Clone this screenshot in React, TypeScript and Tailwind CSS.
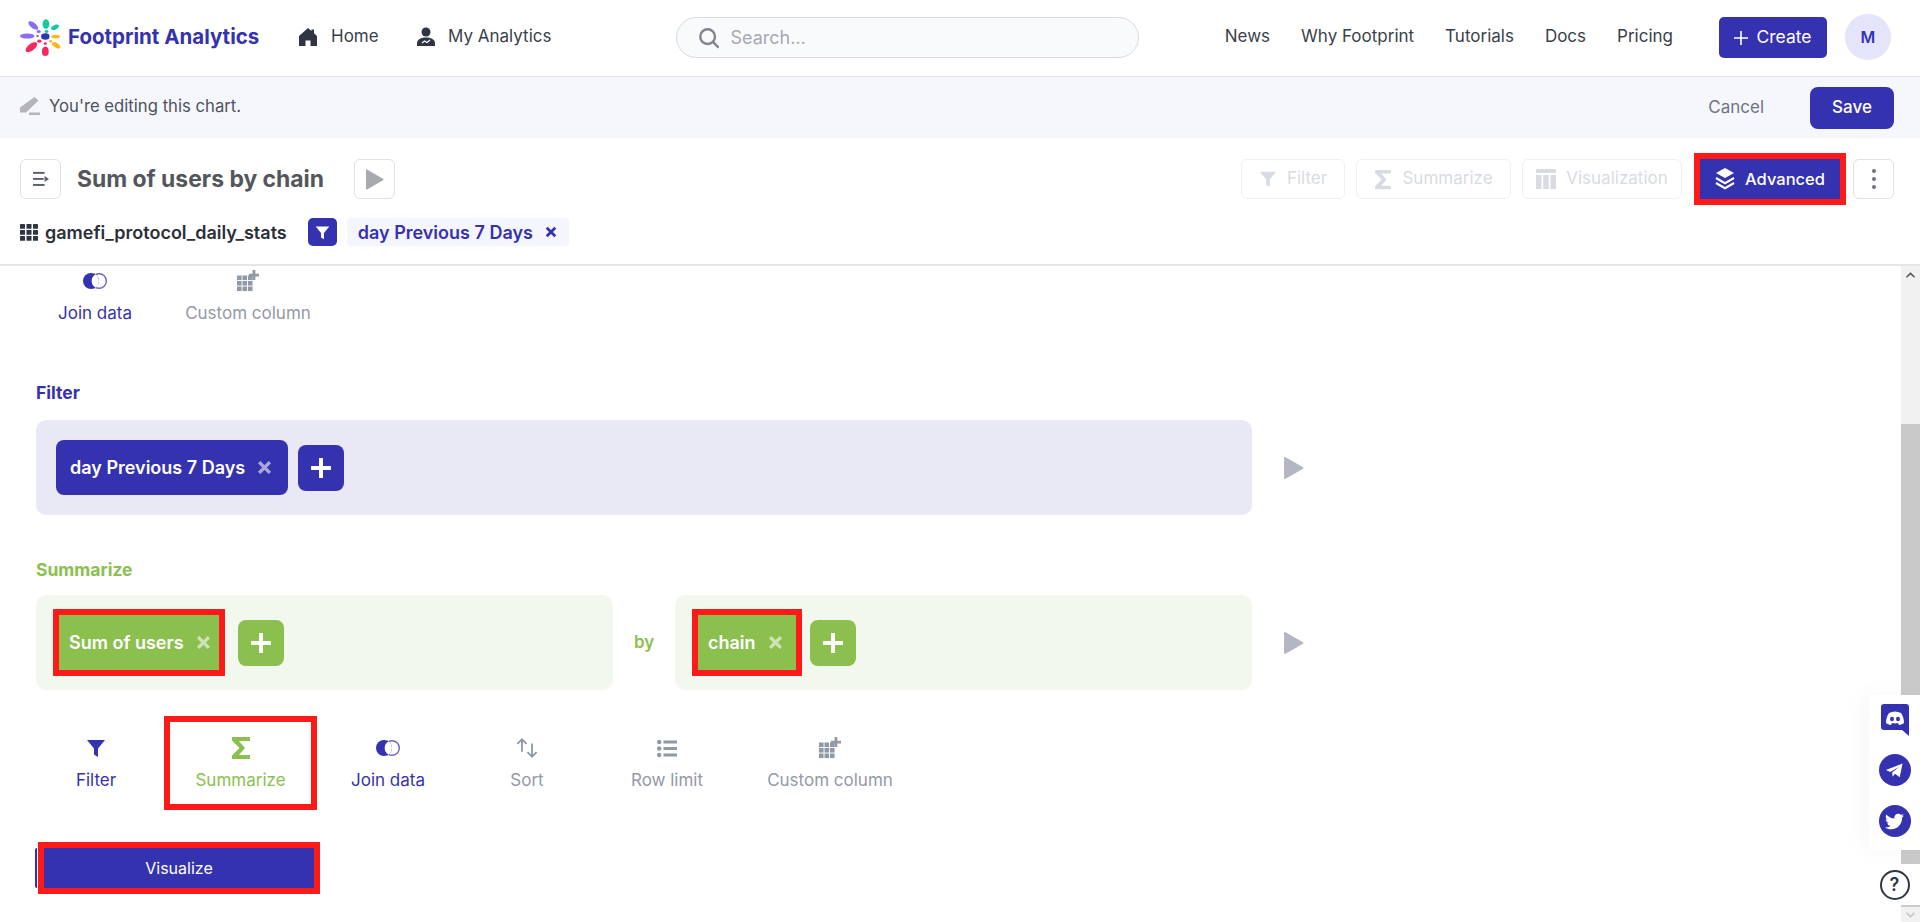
import React from "react";
import { FaTwitter } from "react-icons/fa";

// small drawn icons, same shapes the product uses
const Funnel = ({ className }: { className?: string }) => (
  <svg viewBox="0 0 20 20" className={className} fill="currentColor">
    <path d="M1 2h18l-7 8.500V19l-4-2.500v-6z" />
  </svg>
);

const Sigma = ({ className }: { className?: string }) => (
  <svg viewBox="0 0 20 24" className={className} fill="currentColor">
    <path d="M1 1h18v4H8l6 7-6 7h11v4H1v-3.500L8.500 12 1 4.500z" />
  </svg>
);

const Plus = ({ className }: { className?: string }) => (
  <svg viewBox="0 0 20 20" className={className} fill="currentColor">
    <path d="M8.200 1h3.600v7.200H19v3.600h-7.200V19H8.200v-7.200H1V8.200h7.200z" />
  </svg>
);

const Cross = ({ className }: { className?: string }) => (
  <svg viewBox="0 0 14 14" className={className} stroke="currentColor" strokeWidth="3.200" fill="none">
    <path d="M2 2l10 10M12 2L2 12" />
  </svg>
);

const Play = ({ className }: { className?: string }) => (
  <svg viewBox="0 0 20 22" className={className} fill="currentColor">
    <path d="M1 1.500v19a1 1 0 0 0 1.500.8l16.500-9.500a1 1 0 0 0 0-1.600L2.500.7A1 1 0 0 0 1 1.500z" />
  </svg>
);

const Grid = ({ className }: { className?: string }) => (
  <svg viewBox="0 0 19 17" className={className} fill="currentColor">
    {[0, 6.5, 13].map((x) =>
      [0, 6, 12].map((y) => <rect key={`${x}-${y}`} x={x} y={y} width="5" height="4.800" rx="0.500" />)
    )}
  </svg>
);

const JoinIcon = ({ className }: { className?: string }) => (
  <svg viewBox="0 0 24 18" className={className}>
    <circle cx="8" cy="9" r="8" fill="currentColor" />
    <circle cx="16" cy="9" r="7.300" fill="none" stroke="currentColor" strokeOpacity="0.750" strokeWidth="1.400" />
    <path d="M12 2.100A8 8 0 0 1 12 15.900A8 8 0 0 1 12 2.100z" fill="#fff" />
    <path d="M12 2.100A8 8 0 0 0 12 15.900" fill="none" stroke="currentColor" strokeWidth="1.200" />
  </svg>
);

const CustomColumnIcon = ({ className }: { className?: string }) => (
  <svg viewBox="0 0 24 24" className={className} fill="currentColor">
    {[0, 6, 12].map((x) =>
      [6, 12, 18].map((y) => <rect key={`${x}-${y}`} x={x} y={y} width="5" height="5" />)
    )}
    <path d="M17 0h3v4h4v3h-4v4h-3V7h-4V4h4z" />
  </svg>
);

const SortIcon = ({ className }: { className?: string }) => (
  <svg viewBox="0 0 24 24" className={className} fill="none" stroke="currentColor" strokeWidth="2">
    <path d="M6.500 16V2.500M1.500 7.500l5-5 5 5M17.500 7v14.500M12.500 16.500l5 5 5-5" />
  </svg>
);

const RowLimitIcon = ({ className }: { className?: string }) => (
  <svg viewBox="0 0 20 18" className={className} fill="currentColor">
    <circle cx="2.200" cy="2.500" r="2.200" />
    <circle cx="2.200" cy="9" r="2.200" />
    <circle cx="2.200" cy="15.500" r="2.200" />
    <rect x="6.500" y="1" width="13.500" height="3" />
    <rect x="6.500" y="7.500" width="13.500" height="3" />
    <rect x="6.500" y="14" width="13.500" height="3" />
  </svg>
);

const Logo = () => (
  <svg viewBox="2 1.500 34 40" preserveAspectRatio="none" className="w-[41px] h-[37px] shrink-0">
    <ellipse cx="23.500" cy="7" rx="2.800" ry="5.200" fill="#14c8a0" />
    <ellipse cx="31" cy="10.500" rx="2.200" ry="3.800" transform="rotate(50 31 10.500)" fill="#14c8a0" />
    <circle cx="24" cy="15" r="1.600" fill="#14c8a0" />
    <ellipse cx="13" cy="8.500" rx="2.600" ry="5.600" transform="rotate(-40 13 8.500)" fill="#8b6cf6" />
    <circle cx="17.500" cy="15" r="1.700" fill="#8b6cf6" />
    <ellipse cx="8" cy="20" rx="6" ry="2.700" fill="#8b6cf6" />
    <circle cx="16.500" cy="20" r="1.200" fill="#8b6cf6" />
    <circle cx="23" cy="20.500" r="3.500" fill="#3532b0" />
    <ellipse cx="31.500" cy="20.500" rx="3.600" ry="2" fill="#fdb714" />
    <circle cx="27.500" cy="25.500" r="1.300" fill="#fdb714" />
    <ellipse cx="32" cy="30" rx="2.300" ry="4.200" transform="rotate(-45 32 30)" fill="#fdb714" />
    <circle cx="18" cy="25.500" r="1.800" fill="#f8285e" />
    <ellipse cx="11.500" cy="32" rx="3.200" ry="6.500" transform="rotate(40 11.500 32)" fill="#f8285e" />
    <circle cx="23" cy="28" r="1.300" fill="#f8285e" />
    <ellipse cx="23" cy="36.500" rx="2.800" ry="5" fill="#f8285e" />
  </svg>
);

const Tool = ({ icon, label, color, width }: { icon: React.ReactNode; label: string; color: string; width: string }) => (
  <div className={`flex flex-col items-center shrink-0 ${width} ${color}`}>
    <div className="h-[28px] flex items-center justify-center">{icon}</div>
    <span className="mt-[6px] text-[17px] leading-[24px] whitespace-nowrap">{label}</span>
  </div>
);

const FaintButton = ({ icon, label, width }: { icon: React.ReactNode; label: string; width: string }) => (
  <div className={`h-[40px] ${width} rounded-[6px] border border-[#f0f0f3] flex items-center justify-center gap-[10px] text-[#d9dbe4] text-[17px]`}>
    {icon}
    <span>{label}</span>
  </div>
);

export default function App() {
  return (
    <div className="relative w-[1920px] h-[922px] overflow-hidden bg-white font-['Inter',sans-serif] text-[#3a3f4b]">
      {/* top nav */}
      <header className="h-[77px] flex items-center border-b border-[#e3e4ee] pl-[20px] pr-[29px]">
        <div className="flex items-center w-[278px] -mt-[1px]">
          <Logo />
          <span className="ml-[7px] text-[20.500px] font-bold text-[#3532b0] whitespace-nowrap">Footprint Analytics</span>
        </div>
        <div className="flex items-center gap-[13px] w-[118px] -mt-[2px]">
          <svg viewBox="0 0 20 20" className="w-[20px] h-[20px] shrink-0 text-[#2f3542]" fill="currentColor">
            <path d="M10 1L1 9v10h6.500v-5.500h5V19H19V9l-3-2.700V2.500h-2.500v1.600z" />
          </svg>
          <span className="text-[17px]">Home</span>
        </div>
        <div className="flex items-center gap-[12px] -mt-[2px]">
          <svg viewBox="0 0 20 20" className="w-[20px] h-[20px] shrink-0 text-[#2f3542]" fill="currentColor">
            <circle cx="10" cy="5" r="4.500" />
            <path d="M1 19v-3c0-3 3-5.500 9-5.500s9 2.500 9 5.500v3z" />
            <path d="M6 16l2.500-2 2.500 1.500 3-2.500" stroke="#fff" strokeWidth="1.200" fill="none" />
          </svg>
          <span className="text-[17px]">My Analytics</span>
        </div>
        <div className="ml-[125px] w-[463px] h-[41px] rounded-full border border-[#d7dae3] bg-[#f9fafb] flex items-center pl-[21px] -mt-[1px]">
          <svg viewBox="0 0 24 24" className="w-[22px] h-[22px] text-[#80848f]" fill="none" stroke="currentColor" strokeWidth="2.600">
            <circle cx="10.500" cy="10.500" r="8" />
            <path d="M16.500 16.500L22.500 22.500" />
          </svg>
          <span className="ml-[10px] text-[18px] text-[#a6a9b3]">Search…</span>
        </div>
        <nav className="ml-auto flex items-center gap-[31px] text-[17px] -mt-[2px]">
          <span>News</span>
          <span>Why Footprint</span>
          <span>Tutorials</span>
          <span>Docs</span>
          <span>Pricing</span>
        </nav>
        <div className="ml-[46px] w-[108px] h-[41px] rounded-[5px] bg-[#3532b0] text-white text-[17.500px] flex items-center justify-center gap-[8px] -mt-[1px]">
          <svg viewBox="0 0 14 14" className="w-[14px] h-[14px]" stroke="currentColor" strokeWidth="1.600" fill="none">
            <path d="M7 0v14M0 7h14" />
          </svg>
          <span>Create</span>
        </div>
        <div className="ml-[18px] w-[46px] h-[46px] rounded-full bg-[#e4e4fa] text-[#3532b0] font-semibold text-[16px] flex items-center justify-center -mt-[3px]">
          M
        </div>
      </header>

      {/* editing bar */}
      <div className="h-[61px] bg-[#f6f7fc] flex items-center pl-[20px] pr-[26px]">
        <svg viewBox="0 0 20 18" className="w-[20px] h-[18px] text-[#b4b4ba] -mt-[4px]" fill="currentColor">
          <path d="M14.500 0l4 3.500L6 15.500H0v-5zM9 15.500h11V18H9z" />
        </svg>
        <span className="ml-[9px] text-[16.700px] text-[#4c5260] -mt-[2px]">You're editing this chart.</span>
        <span className="ml-auto text-[17px] text-[#6f7480]">Cancel</span>
        <div className="ml-[46px] w-[84px] h-[42px] rounded-[8px] bg-[#3532b0] text-white text-[17px] font-medium flex items-center justify-center">
          Save
        </div>
      </div>

      {/* chart title rows */}
      <div className="h-[128px] border-b-2 border-[#e6e6ea] pl-[20px] pr-[26px] pt-[21px]">
        <div className="flex items-center h-[40px]">
          <div className="w-[41px] h-[40px] rounded-[6px] border border-[#dfe1e8] flex items-center justify-center">
            <svg viewBox="0 0 20 18" className="w-[18px] h-[16px] text-[#5b6070]" fill="currentColor">
              <rect x="1" y="1" width="13" height="2.200" />
              <rect x="1" y="7.800" width="12" height="2.200" />
              <rect x="1" y="14.600" width="13" height="2.200" />
              <path d="M14 5.500l5 3.400-5 3.400z" />
            </svg>
          </div>
          <h1 className="ml-[16px] text-[22.900px] font-bold text-[#55565c]">Sum of users by chain</h1>
          <div className="ml-[30px] w-[41px] h-[40px] rounded-[6px] border border-[#dfe1e8] flex items-center justify-center">
            <Play className="w-[19px] h-[21px] text-[#a9a9b0]" />
          </div>
          <div className="ml-auto flex items-center gap-[11px]">
            <FaintButton width="w-[104px]" label="Filter" icon={<Funnel className="w-[18px] h-[20px]" />} />
            <FaintButton width="w-[155px]" label="Summarize" icon={<Sigma className="w-[18px] h-[21px]" />} />
            <FaintButton width="w-[160px]" label="Visualization" icon={<svg viewBox="0 0 20 20" className="w-[20px] h-[20px]" fill="currentColor"><path d="M0 0h20v4H0zM0 6h5.500v14H0zM7.200 6h5.500v14H7.200zM14.500 6H20v14h-5.500z" /></svg>} />
            <div className="ml-[7px] w-[140px] h-[40px] bg-[#3532b0] outline-[6px] outline-[#ff1a1a] text-white text-[16.500px] font-medium flex items-center justify-center gap-[10px]">
              <svg viewBox="0 0 20 22" className="w-[20px] h-[22px]" fill="currentColor">
                <path d="M10 0l9 5-9 5-9-5z" />
                <path d="M1.500 9l8.500 5 8.500-5 1 2-9.500 5.500L.500 11z" />
                <path d="M1.500 14l8.500 5 8.500-5 1 2-9.500 5.500L.500 16z" />
              </svg>
              <span>Advanced</span>
            </div>
            <div className="ml-[2px] w-[41px] h-[40px] rounded-[6px] border border-[#dfe1e8] flex flex-col items-center justify-center gap-[4px]">
              <span className="w-[4px] h-[4px] rounded-full bg-[#6e7280]" />
              <span className="w-[4px] h-[4px] rounded-full bg-[#6e7280]" />
              <span className="w-[4px] h-[4px] rounded-full bg-[#6e7280]" />
            </div>
          </div>
        </div>
        <div className="flex items-center mt-[19px] h-[28px]">
          <Grid className="w-[19px] h-[17px] text-[#2f3542]" />
          <span className="ml-[6px] text-[18px] font-semibold text-[#2b2f38]">gamefi_protocol_daily_stats</span>
          <div className="ml-[21px] w-[29px] h-[28px] rounded-[5px] bg-[#3532b0] flex items-center justify-center">
            <Funnel className="w-[15px] h-[15px] text-white" />
          </div>
          <div className="ml-[10px] h-[28px] w-[222px] rounded-[4px] bg-[#f5f6fd] text-[#3532b0] text-[18px] font-semibold flex items-center pl-[11px]">
            <span>day Previous 7 Days</span>
            <Cross className="ml-[12px] w-[12px] h-[12px]" />
          </div>
        </div>
      </div>

      {/* scrolled query builder */}
      <main className="pl-[36px] pt-[1px]">
        <div className="flex text-[#3532b0]">
          <Tool width="w-[118px]" label="Join data" color="text-[#3532b0]" icon={<JoinIcon className="w-[24px] h-[18px]" />} />
          <Tool width="w-[188px]" label="Custom column" color="text-[#9399a8]" icon={<CustomColumnIcon className="w-[22px] h-[22px] text-[#8f9aa6]" />} />
        </div>

        <div className="mt-[56px] text-[17.500px] font-bold text-[#3532b0] leading-[24px]">Filter</div>
        <div className="flex items-center mt-[15px]">
          <div className="w-[1216px] h-[95px] rounded-[10px] bg-[#e9e9f5] pl-[20px] flex items-center gap-[10px]">
            <div className="w-[232px] h-[55px] rounded-[8px] bg-[#3532b0] text-white text-[18px] font-semibold flex items-center pl-[14px]">
              <span>day Previous 7 Days</span>
              <Cross className="ml-[12px] w-[15px] h-[15px] text-[#a9a8dc]" />
            </div>
            <div className="w-[46px] h-[46px] rounded-[8px] bg-[#3532b0] flex items-center justify-center">
              <Plus className="w-[22px] h-[22px] text-white" />
            </div>
          </div>
          <Play className="ml-[31px] w-[21px] h-[24px] text-[#b4b6c4]" />
        </div>

        <div className="mt-[43px] text-[17.500px] font-bold text-[#8bc04f] leading-[24px]">Summarize</div>
        <div className="flex items-center mt-[13px]">
          <div className="w-[577px] h-[95px] rounded-[10px] bg-[#f2f8ed] pl-[23px] flex items-center">
            <div className="w-[160px] h-[55px] bg-[#8bc04f] outline-[6px] outline-[#ff1a1a] text-white text-[18px] font-semibold flex items-center pl-[10px]">
              <span>Sum of users</span>
              <Cross className="ml-[12px] w-[15px] h-[15px] text-[#cfe3b5]" />
            </div>
            <div className="ml-[19px] w-[46px] h-[46px] rounded-[8px] bg-[#8bc04f] flex items-center justify-center">
              <Plus className="w-[22px] h-[22px] text-white" />
            </div>
          </div>
          <span className="ml-[21px] w-[41px] text-[17px] font-semibold text-[#8bc04f]">by</span>
          <div className="w-[577px] h-[95px] rounded-[10px] bg-[#f2f8ed] pl-[23px] flex items-center">
            <div className="w-[98px] h-[55px] bg-[#8bc04f] outline-[6px] outline-[#ff1a1a] text-white text-[18px] font-semibold flex items-center pl-[10px]">
              <span>chain</span>
              <Cross className="ml-[12px] w-[15px] h-[15px] text-[#cfe3b5]" />
            </div>
            <div className="ml-[14px] w-[46px] h-[46px] rounded-[8px] bg-[#8bc04f] flex items-center justify-center">
              <Plus className="w-[22px] h-[22px] text-white" />
            </div>
          </div>
          <Play className="ml-[31px] w-[21px] h-[24px] text-[#b4b6c4]" />
        </div>

        <div className="flex items-start mt-[26px] ml-[1px]">
          <div className="mt-[18px] w-[118px]">
            <Tool width="w-[118px]" label="Filter" color="text-[#3532b0]" icon={<Funnel className="w-[20px] h-[24px]" />} />
          </div>
          <div className="ml-[9px] w-[153px] h-[94px] border-[6px] border-[#ff1a1a] pt-[12px] flex justify-center">
            <Tool width="w-[120px]" label="Summarize" color="text-[#8bc04f]" icon={<Sigma className="w-[20px] h-[26px]" />} />
          </div>
          <div className="mt-[18px] ml-[12px] w-[118px]">
            <Tool width="w-[118px]" label="Join data" color="text-[#3532b0]" icon={<JoinIcon className="w-[24px] h-[18px]" />} />
          </div>
          <div className="mt-[18px] ml-[21px] w-[118px]">
            <Tool width="w-[118px]" label="Sort" color="text-[#9399a8]" icon={<SortIcon className="w-[22px] h-[22px] text-[#8f9aa6]" />} />
          </div>
          <div className="mt-[18px] ml-[22px] w-[118px]">
            <Tool width="w-[118px]" label="Row limit" color="text-[#9399a8]" icon={<RowLimitIcon className="w-[20px] h-[19px] text-[#8f9aa6]" />} />
          </div>
          <div className="mt-[18px] w-[208px]">
            <Tool width="w-[208px]" label="Custom column" color="text-[#9399a8]" icon={<CustomColumnIcon className="w-[22px] h-[22px] text-[#8f9aa6]" />} />
          </div>
        </div>

        <div className="flex items-center mt-[38px] -ml-[1px]">
          <span className="w-[2px] h-[40px] rounded-l-[4px] bg-[#3532b0]" />
          <div className="ml-[7px] w-[270px] h-[40px] bg-[#3532b0] outline-[6px] outline-[#ff1a1a] text-white text-[16px] flex items-center justify-center">
            Visualize
          </div>
        </div>
      </main>

      {/* scrollbar */}
      <div className="absolute right-0 top-[266px] bottom-0 w-[19px] bg-[#f1f1f1] flex flex-col items-center">
        <svg viewBox="0 0 10 6" className="mt-[6px] w-[9px] h-[6px] text-[#505050]" fill="currentColor">
          <path d="M5 0l5 5-1 1-4-3.500L1 6 0 5z" />
        </svg>
        <div className="mt-[146px] w-full h-[483px] bg-[#c9c9c9]" />
        <svg viewBox="0 0 10 6" className="mt-[5px] w-[9px] h-[6px] text-[#c4c4c4]" fill="currentColor">
          <path d="M5 6L0 1l1-1 4 3.500L9 0l1 1z" />
        </svg>
      </div>

      {/* social + help */}
      <div className="absolute right-0 top-[695px] w-[51px] h-[155px] bg-white shadow-[-8px_0_24px_rgba(0,0,0,0.03)] flex flex-col items-center pt-[9px] gap-[19px]">
        <svg viewBox="0 0 28 32" className="w-[28px] h-[32px]">
          <path d="M3 0h22a3 3 0 0 1 3 3v29l-7-6H3a3 3 0 0 1-3-3V3a3 3 0 0 1 3-3z" fill="#3532b0" />
          <path d="M8 9c4-2 8-2 12 0 2 3 3 6 3 10-1.500 1-3 1.800-5 2l-1-2c-2 .6-4 .6-6 0l-1 2c-2-.2-3.500-1-5-2 0-4 1-7 3-10z" fill="#fff" />
          <ellipse cx="11" cy="15" rx="2" ry="2.200" fill="#3532b0" />
          <ellipse cx="17" cy="15" rx="2" ry="2.200" fill="#3532b0" />
        </svg>
        <div className="w-[32px] h-[32px] rounded-full bg-[#3532b0] flex items-center justify-center -mt-[1px]">
          <svg viewBox="0 0 20 20" className="w-[19px] h-[19px]" fill="#fff">
            <path d="M1 9.500L18.500 2.500 15.500 17l-5-3.500-2.500 3-.5-4.500L15 6 5.500 11.500z" />
          </svg>
        </div>
        <div className="w-[32px] h-[32px] rounded-full bg-[#3532b0] flex items-center justify-center">
          <FaTwitter className="w-[19px] h-[19px] text-white" />
        </div>
      </div>
      <div className="absolute right-0 top-[864px] w-[51px] h-[41px] rounded-l-full bg-white flex items-center justify-center">
        <div className="w-[30px] h-[30px] rounded-full border-2 border-[#2f3542] flex items-center justify-center text-[18px] font-semibold text-[#2f3542]">
          ?
        </div>
      </div>
    </div>
  );
}
